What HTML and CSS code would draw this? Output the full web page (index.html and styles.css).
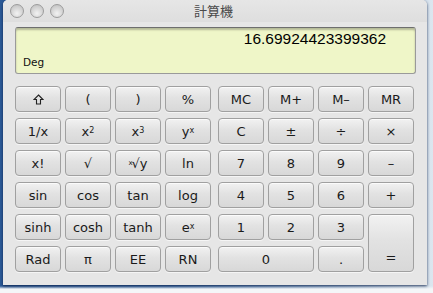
FILE: index.html
```html
<!DOCTYPE html>
<html>
<head>
<meta charset="utf-8">
<link rel="stylesheet" href="styles.css">
</head>
<body>
<div class="window">
  <div class="titlebar">
    <div class="lights">
      <span class="light"></span><span class="light"></span><span class="light"></span>
    </div>
    <div class="title">計算機</div>
  </div>
  <div class="content">
    <div class="display">
      <div class="value">16.69924423399362</div>
      <div class="mode">Deg</div>
    </div>
    <div class="keypad">
      <div class="grid left">
        <button class="key"><svg width="11" height="11" viewBox="0 0 11 11"><path d="M5.5 1 L10 5.5 L7.5 5.5 L7.5 10 L3.5 10 L3.5 5.5 L1 5.5 Z" fill="none" stroke="#222" stroke-width="1.1" stroke-linejoin="miter"/></svg></button>
        <button class="key">(</button>
        <button class="key">)</button>
        <button class="key">%</button>
        <button class="key">1/x</button>
        <button class="key">x<sup>2</sup></button>
        <button class="key">x<sup>3</sup></button>
        <button class="key">y<sup>x</sup></button>
        <button class="key">x!</button>
        <button class="key">√</button>
        <button class="key"><sup class="root">x</sup>√y</button>
        <button class="key">ln</button>
        <button class="key">sin</button>
        <button class="key">cos</button>
        <button class="key">tan</button>
        <button class="key">log</button>
        <button class="key">sinh</button>
        <button class="key">cosh</button>
        <button class="key">tanh</button>
        <button class="key">e<sup>x</sup></button>
        <button class="key">Rad</button>
        <button class="key">π</button>
        <button class="key">EE</button>
        <button class="key">RN</button>
      </div>
      <div class="grid right">
        <button class="key">MC</button>
        <button class="key">M+</button>
        <button class="key">M–</button>
        <button class="key">MR</button>
        <button class="key">C</button>
        <button class="key">±</button>
        <button class="key">÷</button>
        <button class="key">×</button>
        <button class="key">7</button>
        <button class="key">8</button>
        <button class="key">9</button>
        <button class="key">–</button>
        <button class="key">4</button>
        <button class="key">5</button>
        <button class="key">6</button>
        <button class="key">+</button>
        <button class="key">1</button>
        <button class="key">2</button>
        <button class="key">3</button>
        <button class="key equals">=</button>
        <button class="key zero">0</button>
        <button class="key">.</button>
      </div>
    </div>
  </div>
</div>
</body>
</html>
```
FILE: styles.css
```css
html, body {
  margin: 0;
  padding: 0;
}
body {
  width: 433px;
  height: 293px;
  overflow: hidden;
  background: linear-gradient(to bottom, rgba(255,255,255,0) 0, rgba(255,255,255,0) 286px, #f4f6f8 289px),
              linear-gradient(to right, #2c5a97 0, #3f6ea8 40%, #9fb8d4 80%, #dce6ef 100%);
  font-family: "DejaVu Sans", "Noto Sans CJK JP", sans-serif;
}
.window {
  margin-left: 3px;
  width: 424px;
  height: 285px;
  background: #e6e6e6;
  border-radius: 5px 5px 0 0;
  box-shadow: 0 1px 3px rgba(10, 30, 70, 0.85);
  display: flex;
  flex-direction: column;
}
.titlebar {
  height: 22px;
  display: flex;
  align-items: center;
  background: linear-gradient(to bottom, #e6e6e6, #dedede);
  border-radius: 5px 5px 0 0;
}
.lights {
  display: flex;
  gap: 6px;
  padding-left: 7px;
}
.light {
  width: 14px;
  height: 14px;
  border-radius: 50%;
  box-sizing: border-box;
  border: 1px solid #9c9c9c;
  background: radial-gradient(circle at 50% 70%, #f2f2f2 0, #d4d4d4 55%, #bcbcbc 100%);
}
.title {
  flex: 1;
  text-align: center;
  margin-right: 64px;
  font-family: "Noto Sans CJK JP", sans-serif;
  font-size: 13px;
  color: #4a4a4a;
  line-height: 22px;
}
.content {
  padding: 5px 12px 0 12px;
  display: flex;
  flex-direction: column;
  gap: 12px;
}
.display {
  width: 401px;
  height: 47px;
  box-sizing: border-box;
  border: 1px solid #9a9a9a;
  border-top-color: #6e6e6e;
  border-radius: 3px;
  background: #eff6c8;
  box-shadow: inset 0 2px 2px rgba(0, 0, 0, 0.25);
  display: flex;
  flex-direction: column;
  padding: 2px 29px 0 7px;
}
.value {
  text-align: right;
  font-family: "Liberation Sans", sans-serif;
  font-size: 15.5px;
  line-height: 18px;
  color: #000;
}
.mode {
  margin-top: 8px;
  font-size: 10.5px;
  color: #111;
}
.keypad {
  display: flex;
  gap: 7px;
}
.grid {
  display: grid;
  grid-template-columns: repeat(4, 46px);
  grid-template-rows: repeat(6, 26px);
  column-gap: 4px;
  row-gap: 6px;
}
.key {
  margin: 0;
  padding: 0;
  box-sizing: border-box;
  border: 1px solid #a0a0a0;
  border-radius: 4px;
  background: linear-gradient(to bottom, #f2f2f2 0, #e2e2e2 45%, #d8d8d8 100%);
  box-shadow: inset 0 1px 0 #fbfbfb, 0 1px 0 rgba(255,255,255,0.6);
  font-family: "DejaVu Sans", sans-serif;
  font-size: 13px;
  color: #1a1a1a;
  display: flex;
  align-items: center;
  justify-content: center;
}
.key sup {
  font-size: 8px;
  line-height: 0;
  vertical-align: 6px;
}
.key sup.root {
  font-size: 7px;
  margin-right: -1px;
  vertical-align: 5px;
}
.key svg {
  display: block;
}
.zero {
  grid-column: 1 / span 2;
  grid-row: 6;
}
.equals {
  grid-column: 4;
  grid-row: 5 / span 2;
  align-items: flex-end;
  padding-bottom: 6px;
}
```
